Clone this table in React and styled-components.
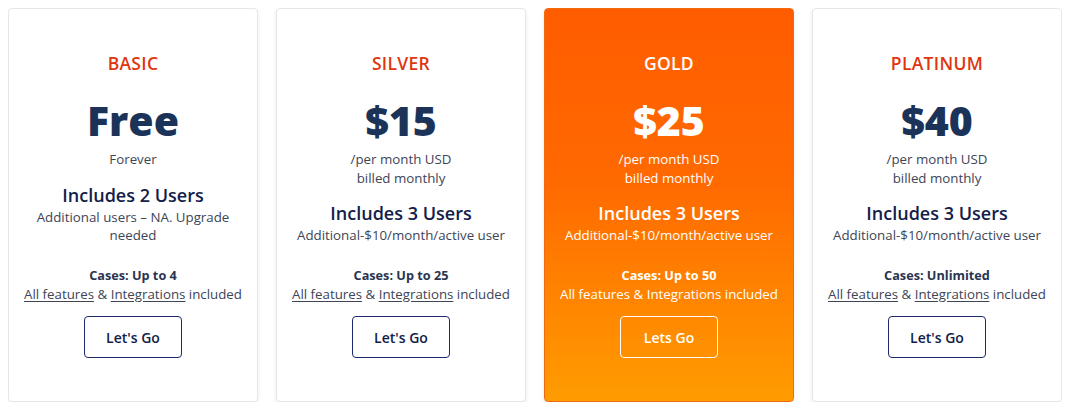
import React from "react";
import styled, { createGlobalStyle, css } from "styled-components";

const GlobalStyle = createGlobalStyle`
  body {
    margin: 8px;
    background: #ffffff;
    font-family: "Open Sans", "Liberation Sans", sans-serif;
  }
`;

const plans = [
  {
    name: "BASIC",
    price: "Free",
    sub: ["Forever"],
    users: "Includes 2 Users",
    extra: ["Additional users – NA. Upgrade", "needed"],
    cases: "Cases: Up to 4",
    cta: "Let's Go",
  },
  {
    name: "SILVER",
    price: "$15",
    sub: ["/per month USD", "billed monthly"],
    users: "Includes 3 Users",
    extra: ["Additional-$10/month/active user"],
    cases: "Cases: Up to 25",
    cta: "Let's Go",
  },
  {
    name: "GOLD",
    price: "$25",
    sub: ["/per month USD", "billed monthly"],
    users: "Includes 3 Users",
    extra: ["Additional-$10/month/active user"],
    cases: "Cases: Up to 50",
    cta: "Lets Go",
    featured: true,
  },
  {
    name: "PLATINUM",
    price: "$40",
    sub: ["/per month USD", "billed monthly"],
    users: "Includes 3 Users",
    extra: ["Additional-$10/month/active user"],
    cases: "Cases: Unlimited",
    cta: "Let's Go",
  },
];

export default function App() {
  return (
    <>
      <GlobalStyle />
      <Grid>
        {plans.map((p) => (
          <Card key={p.name} $featured={p.featured}>
            <Title $featured={p.featured}>{p.name}</Title>
            <Price $featured={p.featured}>{p.price}</Price>
            <Small $featured={p.featured}>
              {p.sub.map((l) => (
                <div key={l}>{l}</div>
              ))}
            </Small>
            <Users $featured={p.featured}>{p.users}</Users>
            <Small $featured={p.featured} $tight>
              {p.extra.map((l) => (
                <div key={l}>{l}</div>
              ))}
            </Small>
            <Cases $featured={p.featured}>{p.cases}</Cases>
            <Small $featured={p.featured} $tight>
              {p.featured ? (
                "All features & Integrations included"
              ) : (
                <>
                  <Link href="#">All features</Link> &amp;{" "}
                  <Link href="#">Integrations</Link> included
                </>
              )}
            </Small>
            <Button $featured={p.featured}>{p.cta}</Button>
          </Card>
        ))}
      </Grid>
    </>
  );
}

const navy = "#1b3358";
const dark = "#13204a";

const Grid = styled.div`
  display: grid;
  grid-template-columns: repeat(4, 250px);
  gap: 18px;
`;

const Card = styled.div`
  box-sizing: border-box;
  height: 394px;
  padding-top: 42px;
  display: flex;
  flex-direction: column;
  align-items: center;
  text-align: center;
  border-radius: 4px;
  background: #ffffff;
  border: 1px solid #e6e6e6;
  box-shadow: 0 2px 4px rgba(0, 0, 0, 0.08);

  ${(p) =>
    p.$featured &&
    css`
      background: linear-gradient(180deg, #ff5c00 0%, #ff6a00 45%, #ff9c00 100%);
      border-color: #f06a10;
    `}
`;

const Title = styled.div`
  font-size: 17.5px;
  line-height: 24px;
  font-weight: 600;
  letter-spacing: 0.3px;
  color: ${(p) => (p.$featured ? "#ffffff" : "#e0360f")};
`;

const Price = styled.div`
  margin-top: 21px;
  font-size: 41px;
  line-height: 48px;
  font-weight: 800;
  color: ${(p) => (p.$featured ? "#ffffff" : navy)};
`;

const Small = styled.div`
  margin-top: ${(p) => (p.$tight ? "1px" : "6px")};
  font-size: 13.3px;
  line-height: 18.5px;
  color: ${(p) => (p.$featured ? "#ffffff" : "#3d4556")};
  padding: 0 10px;
`;

const Users = styled.div`
  margin-top: 14px;
  font-size: 18px;
  line-height: 24px;
  font-weight: 600;
  color: ${(p) => (p.$featured ? "#ffffff" : dark)};
`;

const Cases = styled.div`
  margin-top: 21px;
  font-size: 12.7px;
  line-height: 18px;
  font-weight: 700;
  color: ${(p) => (p.$featured ? "#ffffff" : "#2a3450")};
`;

const Link = styled.a`
  color: inherit;
  text-decoration: underline;
  text-underline-offset: 2px;
`;

const Button = styled.button`
  margin-top: 13px;
  width: 98px;
  height: 42px;
  border-radius: 4px;
  background: transparent;
  font-family: inherit;
  font-size: 14px;
  font-weight: 600;
  cursor: pointer;
  border: 1.5px solid ${(p) => (p.$featured ? "#ffffff" : "#1c2a6b")};
  color: ${(p) => (p.$featured ? "#ffffff" : dark)};
`;
